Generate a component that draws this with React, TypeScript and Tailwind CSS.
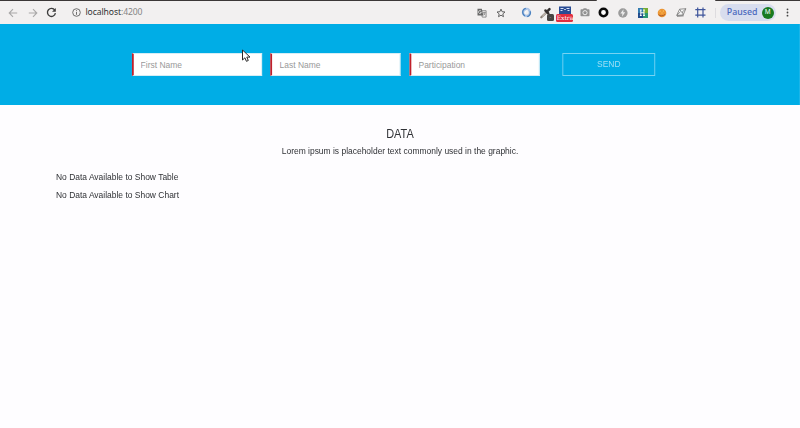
import type { ReactNode } from 'react';

const Slot = ({ children }: { children: ReactNode }) => (
  <span className="relative flex h-[22px] w-[19.35px] shrink-0 items-center justify-center">{children}</span>
);

function Arrow({ flip = false }: { flip?: boolean }) {
  return (
    <svg width="10" height="10" viewBox="0 0 10 10" fill="none" stroke="#a9a8a8" strokeWidth="1.1" className={flip ? 'rotate-180' : ''}>
      <path d="M9.2 5H1.2M5 1.2 1.2 5 5 8.8" />
    </svg>
  );
}

function Toolbar() {
  return (
    <header className="h-6 bg-[#f2f0f0] font-['Noto_Sans','Open_Sans',sans-serif]">
      <div className="flex h-[2px] justify-between">
        <div className="h-[1.4px] w-[597px] rounded-br-sm bg-[#3b3737]" />
        <div className="h-[1.4px] w-[85px] rounded-bl-sm bg-[#3b3737]" />
      </div>
      <div className="flex h-[21px] items-center">
        <div className="flex w-[62px] items-center pl-[3.5px]">
          <Slot><Arrow /></Slot>
          <Slot><Arrow flip /></Slot>
          <Slot>
            <svg width="11" height="11" viewBox="0 0 11 11" fill="none" stroke="#3d3d3d" strokeWidth="1.35">
              <path d="M8.8 3.2A4 4 0 1 0 9.4 6.2" />
              <path d="M9.8 1v3.8H6z" fill="#3d3d3d" stroke="none" />
            </svg>
          </Slot>
        </div>
        <div className="flex w-[408px] items-center pl-[9.5px]">
          <svg width="9" height="9" viewBox="0 0 9 9" fill="none" stroke="#606060" strokeWidth="0.9">
            <circle cx="4.5" cy="4.5" r="3.8" />
            <path d="M4.5 4v2.8M4.5 2.2v1" />
          </svg>
          <span className="ml-[5px] whitespace-nowrap text-[8.6px] leading-none tracking-[-0.1px] text-[#333]">
            localhost<span className="text-[#858585]">:4200</span>
          </span>
        </div>
        <div className="flex w-[46.8px] items-center pl-[2px]">
          <Slot>
            <svg width="10" height="10" viewBox="0 0 10 10">
              <path d="M4.2 2.7h4.9v6.4H5.2z" fill="#f2f0f0" stroke="#777" strokeWidth=".8" />
              <path d="M.5.7h4.3l1.5 6.7H.5z" fill="#686868" />
              <path d="M4.2 3.2A1.5 1.5 0 1 0 4.4 4.5H3" fill="none" stroke="#eee" strokeWidth=".7" />
              <path d="M5.9 4.6h2.8M7.2 3.8v.8m1 .1C7.8 6 7 6.7 6.3 7.1M6.5 5.4c.4.8 1 1.3 1.8 1.7" fill="none" stroke="#666" strokeWidth=".6" />
            </svg>
          </Slot>
          <Slot>
            <svg width="10" height="10" viewBox="0 0 10 10" fill="none" stroke="#555" strokeWidth=".9" strokeLinejoin="round">
              <path d="m5 1.1 1.1 2.6 2.9.3-2.2 1.9.7 2.8L5 7.2 2.5 8.7l.7-2.8L1 4l2.9-.3z" />
            </svg>
          </Slot>
        </div>
        <div className="flex w-[194px] items-center">
          <Slot>
            <svg width="11" height="11" viewBox="0 0 11 11" fill="none">
              <circle cx="5.5" cy="5.5" r="3.5" stroke="#a9c3e7" strokeWidth="2.4" />
              <path d="M4.8 1.3C2.3 1.8 1 4.4 2 6.8c.4 1 1 1.6 1.9 2.1M6.2 9.7c2.4-.5 3.9-3.2 2.9-5.5" stroke="#477ebc" strokeWidth="1.2" />
              <path d="M4 6.5c.2-1.9 1.2-3 2.8-3.4" stroke="#fff" strokeWidth=".9" />
            </svg>
          </Slot>
          <Slot>
            <svg width="12" height="12" viewBox="0 0 11 11">
              <path d="M1.2 9.4 6 4.8" stroke="#8c8279" strokeWidth="2" strokeLinecap="round" />
              <path d="m2.2 8.4 3.200-3.200" stroke="#eee8df" strokeWidth=".8" />
              <path d="m5 3.200 2.600 2.600M6.700 4l2-2" stroke="#34302f" strokeWidth="2.3" strokeLinecap="round" />
            </svg>
            <span className="absolute left-[10.5px] top-[12px] flex h-[7.5px] w-[7.5px] items-center justify-center rounded-[1.5px] bg-[#464442] text-[5px] leading-none text-[#aaa]">-</span>
          </Slot>
          <Slot>
            <svg width="12" height="11" viewBox="0 0 12 11" className="-mt-[2px]">
              <path d="M0 .5h12v10H0z" fill="#294c94" />
              <path d="M1.500 2.500h3M7.500 2.500h3M1.500 4.500h2M5.200 3.500h1.600M8.500 4.500h2" stroke="#d7e3f5" strokeWidth="1" />
            </svg>
            <span className="absolute left-[1px] top-[12px] flex h-[8px] w-[17px] items-center justify-center rounded-[1.5px] bg-[#e22d3f] font-['DejaVu_Serif',serif] text-[6px] leading-none text-white">Extra</span>
          </Slot>
          <Slot>
            <svg width="10" height="9" viewBox="0 0 10 9">
              <path d="M3 1.3 3.700.3h2.600L7 1.300h1.700q.8 0 .8.800v5.300q0 .8-.8.800H1.300q-.8 0-.8-.8V2.100q0-.8.8-.8z" fill="#929292" />
              <circle cx="5" cy="4.700" r="2.100" fill="none" stroke="#eee" strokeWidth="1" />
            </svg>
          </Slot>
          <Slot>
            <svg width="11" height="11" viewBox="0 0 11 11"><circle cx="5.500" cy="5.500" r="3.700" fill="#fff" stroke="#090909" strokeWidth="2.600" /></svg>
          </Slot>
          <Slot>
            <svg width="10" height="10" viewBox="0 0 10 10">
              <circle cx="4.900" cy="5" r="4.700" fill="#9b9b9b" />
              <path d="M5.500 1.300 2.400 5.500h2L4 8.700l3.200-4.400h-2z" fill="#eee" />
            </svg>
          </Slot>
          <Slot>
            <svg width="10" height="10" viewBox="0 0 10 10">
              <path d="M0 0h5v5H0z" fill="#347cb0" />
              <path d="M5 0h5v5H5z" fill="#75ad34" />
              <path d="M0 5h5v5H0z" fill="#214c8c" />
              <path d="M5 5h5v5H5z" fill="#2b9872" />
              <path d="M2.800 2v5.500M6 2v5.500M2.800 4.800H6M1.900 2h1.800M5.100 2h1.800M1.900 7.500h1.800M5.100 7.500h1.800" stroke="#fff" strokeWidth="1" />
            </svg>
          </Slot>
          <Slot>
            <svg width="10" height="10" viewBox="0 0 10 10">
              <circle cx="5" cy="5" r="4.300" fill="#ec9634" />
              <path d="M1.500 6.700c1.900 1.700 4.600 1.500 6.500-.3" stroke="#ad5a25" strokeWidth="1" fill="none" />
              <path d="M2.500 3.200h1.200M5.800 3h1.200M4.500 5h1" stroke="#ffce62" strokeWidth="1" />
            </svg>
          </Slot>
          <Slot>
            <svg width="11" height="9" viewBox="0 0 11 9" fill="#f7f7f7" stroke="#777" strokeWidth=".8">
              <path d="m3.600 1.200 6.300-.5-2.700 6.200-6.500.5z" />
              <path d="m3.600 1.200 2.200 3.300L9.900.7M.7 7.400l3.700-3.600M7.200 6.900 6.500 4" fill="none" />
              <path d="m1 8.200 6.700-.4" stroke="#555" />
            </svg>
          </Slot>
          <Slot>
            <svg width="11" height="11" viewBox="0 0 11 11" fill="none" stroke="#3f559b" strokeWidth="1.200">
              <path d="M2.700.5v10M8 .5v10M.3 2.700h10.200M.3 8.200h10.200" />
            </svg>
          </Slot>
        </div>
        <div className="ml-[4px] h-[10px] w-px bg-[#dedcdf]" />
        <div className="ml-[4px] flex h-[17px] w-[56px] items-center justify-between rounded-full bg-[#d8ddee] pl-[7px] pr-[2px]">
          <span className="text-[8.8px] font-medium leading-none text-[#4968bd]">Paused</span>
          <span className="flex h-3 w-3 items-center justify-center rounded-full bg-[#187a20] text-[6.5px] leading-none text-white">M</span>
        </div>
        <svg className="ml-[10px]" width="3" height="9" viewBox="0 0 3 9" fill="#444">
          <circle cx="1.500" cy="1.300" r=".9" /><circle cx="1.500" cy="4.500" r=".9" /><circle cx="1.500" cy="7.700" r=".9" />
        </svg>
      </div>
    </header>
  );
}

const fields = ['First Name', 'Last Name', 'Participation'];

export default function App() {
  return (
    <div className="relative h-[428px] w-[800px] overflow-hidden bg-[#fefdff] font-['Liberation_Sans',Arial,sans-serif] text-[9.3px] text-[#303236]">
      <Toolbar />
      {/* The page content is condensed horizontally to 91%. */}
      <div className="w-[879.12px] origin-top-left scale-x-[0.91]">
        <form className="flex h-[81px] items-start bg-[#00ade6] pl-[144.5px] pt-[29px]">
          <div className="flex gap-[9.7px]">
            {fields.map((name) => (
              <input
                key={name}
                placeholder={name}
                className="h-[23px] w-[143px] border border-l-2 border-[#d5edf5] border-l-[#c0202b] bg-white pl-[8px] text-[9.3px] outline-none placeholder:text-[#999]"
              />
            ))}
          </div>
          <button type="button" className="ml-[25px] h-[23px] w-[102.2px] border border-[#77d3f2] text-[9.3px] text-[#a0dff4]">SEND</button>
        </form>
        <main className="px-[61.5px] pt-[22px]">
          <h1 className="text-center text-[12px] leading-[15px]">DATA</h1>
          <p className="mt-[4px] text-center leading-[11px]">Lorem ipsum is placeholder text commonly used in the graphic.</p>
          <p className="mt-[15px] leading-[11px]">No Data Available to Show Table</p>
          <p className="mt-[7px] leading-[11px]">No Data Available to Show Chart</p>
        </main>
      </div>
      <svg className="absolute left-[241px] top-[49px]" width="10" height="14" viewBox="0 0 10 14">
        <path d="M1.500 1v10l2.400-2.200 1.500 3.500 1.900-.8-1.500-3.400H9z" fill="#fff" stroke="#292929" strokeWidth="1" strokeLinejoin="round" />
      </svg>
    </div>
  );
}
